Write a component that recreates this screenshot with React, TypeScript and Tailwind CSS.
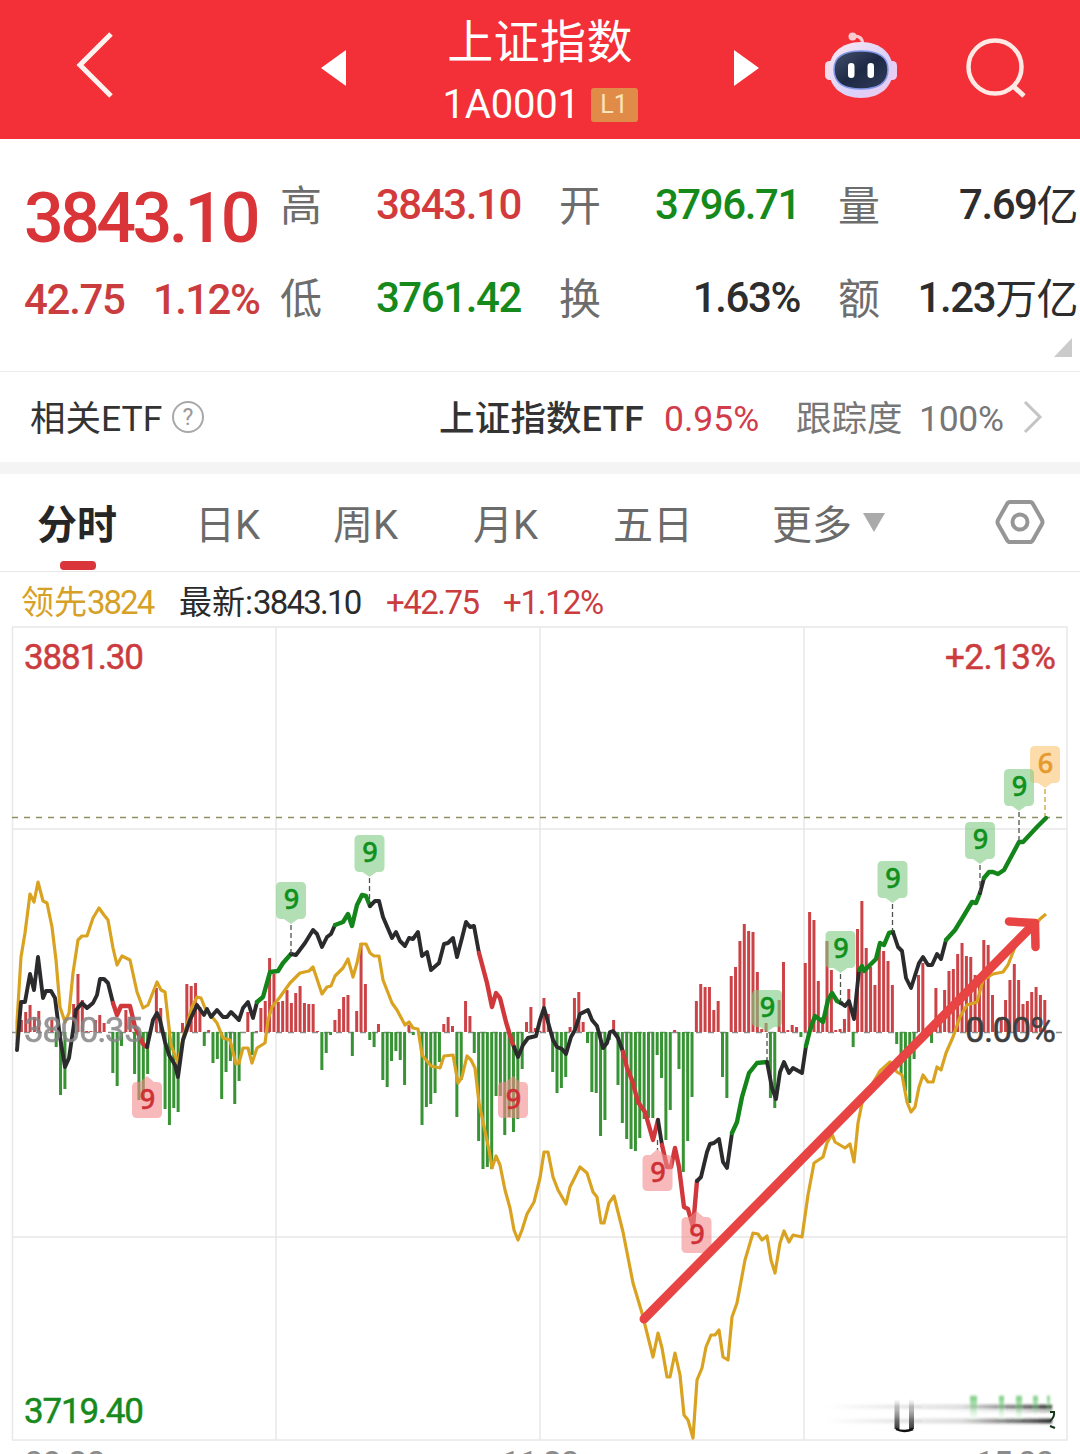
import { clsx } from "clsx";

type Tone = "up" | "down" | "flat";

const TONES: Record<Tone, string> = {
  up: "text-[#d33a3c]",
  down: "text-[#158a1b]",
  flat: "text-[#2d2d2d]",
};

const QUOTES: { label: string; value: string; unit?: string; tone: Tone }[] = [
  { label: "高", value: "3843.10", tone: "up" },
  { label: "开", value: "3796.71", tone: "down" },
  { label: "量", value: "7.69", unit: "亿", tone: "flat" },
  { label: "低", value: "3761.42", tone: "down" },
  { label: "换", value: "1.63%", tone: "flat" },
  { label: "额", value: "1.23", unit: "万亿", tone: "flat" },
];

// one entry per minute, positive = above the zero line
const BARS = [
  0, 12, 20, 27, 15, 21, 0, 0, 12, -15, -63, -57, 0, 28, 58, 32, 1, 1, 12, 17, 9, 0, -41, -54, -14, 22, 15, -42, -68, -68,
  -42, 0, 44, 24, -77, -93, -76, -80, 9, 48, 46, 49, 25, -14, 2, -31, -27, -67, -40, -29, -72, -49, 0, 20, -23, 1, 24, 31, 74, 58,
  30, 31, 42, 29, 39, 46, 29, 28, 28, 1, -38, -21, -3, 12, 23, 35, 37, -24, 21, 89, 48, -8, -15, 8, -48, -55, -29, -19, -28, -53,
  7, -3, 0, -93, -75, -72, -61, -30, 8, 15, 6, -85, -48, 31, 16, -21, -109, -137, -135, -137, -64, -64, -103, -85, -100, -87, -37, 10, 25, 4,
  1, 34, 18, -40, -61, -56, -45, 5, 34, 40, 10, -11, -60, -61, -104, -88, -8, 12, -53, -91, -107, -117, -119, -106, -87, -86, -86, -23, -46, -108,
  -78, 2, -37, -140, -109, -65, 31, 48, 45, 45, 22, 31, -45, -66, 56, 65, 91, 108, 101, 100, 60, 3, 9, -66, -76, 32, 70, 2, 7, 5,
  -5, 69, 120, 112, 51, 15, 91, 62, 2, 3, 13, 43, -15, 103, 131, 84, 65, 47, 88, 81, 71, 47, -12, -43, -59, -71, -27, 57, 69, 0,
  -11, 44, 9, 42, 61, 63, 78, 89, 76, 75, 57, 57, 92, 87, 37, 1, 14, 32, 52, 68, 52, 28, 31, 40, 45, 37, 32,
];

const BASE = 1032;

const LEAD =
  "17,1045 17,1022 21,957 25,933 30,894 34,902 38,882 43,901 47,903 52,927 56,960 60,1007 65,1022 69,1013 73,973 78,940 82,936 87,936 93,918 99,908 104,915 108,920 113,948 117,965 122,956 130,960 137,992 143,1008 148,1005 157,982 161,990 165,992 171,1045 178,1063 183,1038 192,1007 197,997 201,998 205,1008 213,1018 217,1023 223,1038 230,1040 236,1064 239,1063 243,1048 248,1048 252,1063 257,1048 265,1043 268,1020 272,1007 280,997 290,983 300,973 309,971 313,967 322,994 327,987 331,986 335,976 343,968 348,959 353,977 357,963 361,944 366,944 370,953 374,956 379,956 383,980 392,1003 397,1010 405,1025 409,1022 413,1028 418,1029 422,1055 431,1066 440,1068 444,1056 453,1055 458,1083 462,1077 467,1056 471,1060 475,1068 479,1103 489,1150 492,1168 496,1156 500,1165 505,1190 510,1208 514,1230 518,1240 522,1230 527,1214 534,1202 540,1178 544,1152 548,1152 553,1177 558,1190 566,1204 570,1187 580,1167 587,1173 593,1192 597,1197 601,1223 604,1223 609,1203 614,1196 623,1232 633,1283 642,1313 648,1337 653,1357 658,1333 662,1348 667,1377 670,1377 675,1353 680,1375 684,1415 688,1420 693,1438 697,1380 702,1368 706,1347 711,1335 715,1335 719,1330 723,1357 728,1360 732,1317 737,1303 745,1260 753,1233 758,1234 762,1240 767,1236 771,1260 775,1273 780,1243 784,1231 789,1242 793,1235 802,1237 808,1195 814,1163 823,1157 827,1143 832,1134 835,1142 845,1148 850,1144 854,1162 858,1123 862,1103 871,1086 880,1071 890,1062 897,1072 902,1075 907,1102 911,1112 915,1107 919,1087 923,1075 928,1082 933,1082 937,1067 941,1070 946,1053 953,1037 960,1017 967,1005 977,1002 983,980 993,974 1003,972 1008,965 1015,947 1022,938 1030,932 1040,919 1046,914";

const BLACK = "#2b2b2d";
const RED = "#d0383b";
const GREEN = "#14851a";

const PRICE = [
  { c: BLACK, p: "17,1050 21,1002 25,1002 30,974 34,990 38,957 43,998 46,991 51,991 55,998 60,1037 65,1067 69,1058 76,1010 82,1003 87,1008 93,1003 97,995 100,979 104,979 108,983 113,1003" },
  { c: RED, p: "113,1003 117,1015 121,1006 130,1006 135,1027 138,1033 143,1044 147,1047" },
  { c: BLACK, p: "147,1047 153,1020 157,1013 160,1020 165,1042 169,1055 175,1065 178,1077 183,1040 190,1020 197,1005 204,1015 207,1009 211,1017 217,1010 223,1017 227,1017 231,1012 239,1020 243,1008 248,1002 253,1018 257,1002" },
  { c: GREEN, p: "257,1002 263,997 270,972 278,971 283,963 291,954" },
  { c: BLACK, p: "291,954 296,955 305,943 313,930 317,934 322,947 327,937 331,934 335,925" },
  { c: GREEN, p: "335,925 343,922 348,914 352,926 357,905 362,895 366,896 370,906" },
  { c: BLACK, p: "370,906 375,901 379,901 383,917 392,938 396,932 400,941 405,946 409,938 413,939 418,932 422,956 427,952 431,970 439,963 444,944 448,943 453,938 457,957 462,938 466,922 470,927 474,926 479,953" },
  { c: RED, p: "479,953 487,983 492,1007 496,993 500,998 506,1022 512,1042 514,1047" },
  { c: BLACK, p: "514,1047 518,1057 523,1045 528,1038 536,1036 540,1020 544,1008 548,1022 553,1040 557,1047 562,1049 566,1054 571,1037 575,1030 580,1014 588,1010 592,1020 597,1026 603,1048 607,1043 610,1032 613,1031 618,1038 623,1052" },
  { c: RED, p: "623,1052 627,1068 632,1080 638,1102 645,1112 653,1140 658,1120" },
  { c: BLACK, p: "658,1120 662,1145" },
  { c: RED, p: "662,1145 667,1167 671,1167 675,1148 679,1167 684,1207 688,1209 693,1227 697,1181" },
  { c: BLACK, p: "697,1181 701,1177 707,1152 710,1144 714,1143 719,1139 723,1162 727,1168 732,1133" },
  { c: GREEN, p: "732,1133 737,1122 742,1097 749,1073 757,1063 767,1062" },
  { c: BLACK, p: "767,1062 772,1088 776,1099 780,1072 784,1062 789,1073 793,1068 802,1073 806,1046" },
  { c: GREEN, p: "806,1046 810,1030 815,1016 823,1022 828,1000 832,993 837,1001 841,1003" },
  { c: BLACK, p: "841,1003 845,1006 849,1001 854,1019 859,970" },
  { c: GREEN, p: "859,970 862,966 864,971 872,963 876,959 880,943 884,945 889,933 893,932" },
  { c: BLACK, p: "893,932 898,947 902,951 906,978 911,988 919,963 923,957 928,965 932,965 937,954 941,959 946,940" },
  { c: GREEN, p: "946,940 955,930 963,917 972,902 976,903 980,893" },
  { c: BLACK, p: "980,893 984,878" },
  { c: GREEN, p: "984,878 989,872 993,872 998,874 1004,870 1019,842 1023,842 1037,827 1046,818" },
];

// top = upper edge of the tag, stem = y where the dashed stem meets the line
const TAGS = [
  { x: 291, top: 882, stem: 954, kind: "sell" },
  { x: 369.5, top: 835, stem: 903, kind: "sell" },
  { x: 767, top: 990, stem: 1060, kind: "sell" },
  { x: 840.5, top: 931, stem: 1002, kind: "sell" },
  { x: 892.5, top: 861, stem: 932, kind: "sell" },
  { x: 980, top: 822, stem: 893, kind: "sell" },
  { x: 1045, top: 746, stem: 816, kind: "count" },
  { x: 1019, top: 769, stem: 841, kind: "sell" },
  { x: 147, top: 1082, stem: 0, kind: "buy" },
  { x: 513, top: 1082, stem: 0, kind: "buy" },
  { x: 657.5, top: 1155, stem: 1140, kind: "buy" },
  { x: 696.5, top: 1217, stem: 0, kind: "buy" },
];

const TAG_FILL: Record<string, string> = { sell: "#7fcb82", buy: "#f28a8c", count: "#fbc474" };
const TAG_TEXT: Record<string, string> = { sell: "#10901c", buy: "#cf3035", count: "#e69a2c" };

function Tag({ x, top, stem, kind }: { x: number; top: number; stem: number; kind: string }) {
  const up = kind === "buy";
  return (
    <g>
      {stem > 0 && (
        <line x1={x} x2={x} y1={up ? stem : top + 43} y2={up ? top - 5 : stem}
          stroke={kind === "count" ? "#c9a43c" : "#4c544c"} strokeWidth="1.3" strokeDasharray="5 3" />
      )}
      <g fill={TAG_FILL[kind]} opacity="0.6">
        <path d={up
          ? `M${x - 15} ${top + 5}q0 -5 5 -5h3l7 -6l7 6h3q5 0 5 5v26q0 5 -5 5h-20q-5 0 -5 -5z`
          : `M${x - 15} ${top + 5}q0 -5 5 -5h20q5 0 5 5v27q0 5 -5 5h-3l-7 5l-7 -5h-3q-5 0 -5 -5z`} />
      </g>
      <text x={x + 0.5} y={top + 26.5} textAnchor="middle" fill={TAG_TEXT[kind]} stroke={TAG_TEXT[kind]} strokeWidth="0.5"
        className="font-['Noto_Sans'] text-[27px] font-medium">{kind === "count" ? 6 : 9}</text>
    </g>
  );
}

function Robot() {
  return (
    <svg width="74" height="68" viewBox="0 0 74 68" fill="none">
      <defs>
        <linearGradient id="shell" x1="0" y1="0" x2="1" y2="1">
          <stop offset="0" stopColor="#fde8f0" />
          <stop offset="0.6" stopColor="#d9d2fa" />
          <stop offset="1" stopColor="#f2c8ea" />
        </linearGradient>
        <linearGradient id="visor" x1="0" y1="0" x2="1" y2="1">
          <stop offset="0" stopColor="#43506b" />
          <stop offset="0.5" stopColor="#1e2946" />
          <stop offset="1" stopColor="#2f3c58" />
        </linearGradient>
      </defs>
      <path d="M29 5q9 -1 10 8" stroke="#fbc9d0" strokeWidth="3" />
      <circle cx="28.500" cy="5.500" r="4" fill="#fbc9d0" />
      <rect x="1" y="30" width="10" height="19" rx="4.500" fill="#f3dbea" />
      <rect x="63" y="30" width="10" height="19" rx="4.500" fill="#e9cdf5" />
      <path d="M37 11c20 0 32 12 32 28c0 17 -13 28 -32 28s-32 -11 -32 -28c0 -16 12 -28 32 -28z" fill="url(#shell)" />
      <path d="M37 20c18 0 27 6 27 18.500c0 13.500 -9 19.500 -27 19.500s-27 -6 -27 -19.500c0 -12.500 9 -18.500 27 -18.500z" fill="url(#visor)" stroke="#8296e8" strokeWidth="1.500" />
      <rect x="24" y="32" width="6.500" height="15" rx="3.200" fill="#fff" />
      <rect x="43.500" y="32" width="6.500" height="15" rx="3.200" fill="#fff" />
    </svg>
  );
}

function Header() {
  return (
    <header className="h-[139px] bg-[#f32f38] flex items-center text-white">
      <svg className="ml-[74px] mt-[-9px] shrink-0" width="42" height="68" viewBox="0 0 42 68" fill="none">
        <path d="M37 3L6 34L37 65" stroke="#fff3ef" strokeWidth="5" />
      </svg>
      <svg className="ml-[205px] mt-[-4px] shrink-0" width="25" height="36" viewBox="0 0 25 36"><path d="M0 18L25 0V36z" fill="#fff" /></svg>
      <div className="w-[388px] h-full flex flex-col items-center shrink-0">
        <h1 className="h-[80px] pt-[2px] text-[46px] leading-[80px] tracking-[0.4px]">上证指数</h1>
        <div className="flex items-center gap-[13px] h-[48px] pt-[2px]">
          <span className="text-[40px] leading-[48px] tracking-[-0.2px] w-[135px] whitespace-nowrap">1A0001</span>
          <span className="w-[47px] h-[34px] rounded-[3px] bg-[#e08c48] text-[#fbe3bb] text-[25px] leading-[34px] text-center">L1</span>
        </div>
      </div>
      <svg className="mt-[-4px] shrink-0" width="25" height="36" viewBox="0 0 25 36"><path d="M25 18L0 0V36z" fill="#fff" /></svg>
      <div className="ml-[65px] mt-[-9px] shrink-0"><Robot /></div>
      <svg className="ml-[66px] mt-[-4px] shrink-0" width="64" height="64" viewBox="0 0 64 64" fill="none" stroke="#ffe9e4" strokeWidth="4.500">
        <circle cx="31" cy="31" r="26.500" />
        <path d="M49 50L60 60" strokeWidth="5" />
      </svg>
    </header>
  );
}

function Quotes() {
  return (
    <section className="relative h-[233px] pl-[24px] flex border-b border-[#ececec]">
      <div className="w-[256px] shrink-0">
        <div className="mt-[35px] h-[88px] text-[70px] leading-[88px] font-medium tracking-[-3.6px] text-[#d93438]">3843.10</div>
        <div className="mt-[16px] h-[44px] flex text-[42px] leading-[44px] font-medium tracking-[-1.3px] text-[#cb3c3f]">
          <span className="w-[129px]">42.75</span>
          <span className="tracking-[-1.6px]">1.12%</span>
        </div>
      </div>
      <div className="mt-[19px] h-[186px] grid grid-cols-[241px_241px_240px] gap-x-[38px]">
        {QUOTES.map((q) => (
          <div key={q.label} className="h-[93px] flex items-center justify-between text-[42px] whitespace-nowrap">
            <span className="text-[#6d6d6d] pt-[4px]">{q.label}</span>
            <span className={clsx("tracking-[-1.4px] font-medium", TONES[q.tone])}>
              {q.value}<span className="relative top-[2px] font-normal tracking-[-0.6px]">{q.unit}</span>
            </span>
          </div>
        ))}
      </div>
      <svg className="absolute right-[8px] bottom-[14px]" width="18" height="19" viewBox="0 0 18 19"><path d="M18 0V19H0z" fill="#cbcbcb" /></svg>
    </section>
  );
}

function EtfRow() {
  return (
    <section className="h-[90px] flex items-center text-[35.5px] whitespace-nowrap text-[#333] [&>span]:pt-[6px]">
      <span className="ml-[30px] w-[132px]">相关ETF</span>
      <svg className="ml-[10px]" width="32" height="32" viewBox="0 0 32 32">
        <circle cx="16" cy="16" r="15" fill="none" stroke="#a8a8a8" strokeWidth="2" />
        <text x="16" y="24" textAnchor="middle" fill="#999" className="text-[23px]">?</text>
      </svg>
      <span className="ml-[235px] w-[206px] font-medium tracking-[0.2px]">上证指数ETF</span>
      <span className="ml-[19px] w-[97px] text-[#d23b4a]">0.95%</span>
      <span className="ml-[35px] w-[107px] text-[#777]">跟踪度</span>
      <span className="ml-[16px] w-[86px] text-[#777] tracking-[-0.3px]">100%</span>
      <svg className="ml-[18px]" width="20" height="34" viewBox="0 0 20 34" fill="none"><path d="M2 2L17 17L2 32" stroke="#c4c4c4" strokeWidth="3" /></svg>
    </section>
  );
}

function Tabs() {
  return (
    <nav className="h-[98px] border-b border-[#e8e8e8] flex text-[40px] leading-[104px] text-[#6b6b6b] whitespace-nowrap">
      <div className="ml-[37px] w-[158px] h-[98px]">
        <div className="h-[87px] font-bold text-[#262626]">分时</div>
        <div className="ml-[23px] w-[36px] h-[9px] rounded-[4px] bg-[#d9353a]" />
      </div>
      <span className="w-[138px]">日K</span>
      <span className="w-[140px]">周K</span>
      <span className="w-[140px]">月K</span>
      <span className="w-[159px]">五日</span>
      <span className="w-[91px]">更多</span>
      <svg className="mt-[39px]" width="22" height="19" viewBox="0 0 22 19"><path d="M0 0H22L11 19z" fill="#aaa" /></svg>
      <svg className="ml-[110px] mt-[25px]" width="50" height="46" viewBox="0 0 50 46" fill="none" stroke="#969696" strokeWidth="4">
        <path d="M15 3H35Q37 3 38 5L47 21Q48 23 47 25L38 41Q37 43 35 43H15Q13 43 12 41L3 25Q2 23 3 21L12 5Q13 3 15 3z" />
        <circle cx="25" cy="23" r="7.500" />
      </svg>
    </nav>
  );
}

function Legend() {
  return (
    <div className="h-[54px] flex items-center text-[33px] whitespace-nowrap pt-[7px]">
      <span className="ml-[21px] w-[158px] text-[#d6a126]">领先<span className="tracking-[-2px]">3824</span></span>
      <span className="w-[207px] text-[#2b2b2b]">最新:<span className="tracking-[-1.8px]">3843.10</span></span>
      <span className="w-[117px] tracking-[-1.5px] text-[#cb3c3f]">+42.75</span>
      <span className="tracking-[-1.2px] text-[#cb3c3f]">+1.12%</span>
    </div>
  );
}

function Chart() {
  return (
    <svg className="block" width="1080" height="828" viewBox="0 626 1080 828" fill="none">
      <defs>
        <linearGradient id="fadeX"><stop offset="0" stopColor="#222" stopOpacity="0" /><stop offset="0.6" stopColor="#222" stopOpacity="0.2" /><stop offset="1" stopColor="#111" /></linearGradient>
        <linearGradient id="fadeY" x1="0" y1="0" x2="0" y2="1"><stop offset="0" stopColor="#222" stopOpacity="0" /><stop offset="1" stopColor="#222" stopOpacity="0.9" /></linearGradient>
        <linearGradient id="fadeG" x1="0" y1="0" x2="0" y2="1"><stop offset="0" stopColor="#4fb957" stopOpacity="0.8" /><stop offset="1" stopColor="#8fe09a" stopOpacity="0" /></linearGradient>
        <filter id="soft" x="-10%" y="-50%" width="120%" height="200%"><feGaussianBlur stdDeviation="0.8 1.4" /></filter>
      </defs>

      <g stroke="#e8e8e8" strokeWidth="1.5">
        <rect x="12.500" y="627" width="1054.500" height="813" />
        <path d="M276 627V1440M540 627V1440M804 627V1440M12 829H1067M12 1237H1067" />
      </g>
      <path d="M12 817.500H1062" stroke="#8f8f62" strokeWidth="1.500" strokeDasharray="6 6" />
      <path d="M12 1032.500H1062" stroke="#8c8c8c" strokeWidth="1.500" strokeDasharray="6 6" />

      {BARS.map((h, i) => h !== 0 && (
        <rect key={i} x={15.5 + i * 4.355} y={h > 0 ? BASE - h : BASE} width="3" height={Math.abs(h)} fill={h > 0 ? "#cb4347" : "#379333"} />
      ))}

      <polyline points={LEAD} stroke="#d9a321" strokeWidth="3.2" strokeLinejoin="round" />
      {PRICE.map((s) => (
        <polyline key={s.p} points={s.p} stroke={s.c} strokeWidth={s.c === BLACK ? 3.9 : 4.4} strokeLinejoin="round" strokeLinecap="round" />
      ))}
      {TAGS.map((t) => <Tag key={t.x} {...t} />)}

      <g className="font-[Roboto] text-[35px]" strokeWidth="0.5">
        <text x="24" y="669" fill="#cb3c3f" stroke="#cb3c3f" textLength="120">3881.30</text>
        <text x="945" y="669" fill="#cb3c3f" stroke="#cb3c3f" textLength="111">+2.13%</text>
        <text x="24" y="1423" fill="#178a1d" stroke="#178a1d" textLength="120">3719.40</text>
        <text x="24" y="1042" fill="#858585" stroke="#858585" opacity="0.85" textLength="119">3800.35</text>
        <text x="965" y="1042" fill="#3f3f3f" stroke="#3f3f3f" textLength="91">0.00%</text>
        <g fill="#8b8b8b">
          <text x="24" y="1476" textLength="82">09:30</text>
          <text x="501" y="1476" textLength="79">11:30</text>
          <text x="975" y="1476" textLength="80">15:00</text>
        </g>
      </g>

      <g stroke="#e84444" strokeLinecap="round" strokeLinejoin="round">
        <path d="M644 1319L1031 927" strokeWidth="9" />
        <path d="M1009 921.500L1035 923L1035.500 947" strokeWidth="8.500" />
      </g>

      <g filter="url(#soft)">
        <rect x="826" y="1405" width="226" height="3.500" fill="url(#fadeX)" />
        <rect x="826" y="1419" width="226" height="4" fill="url(#fadeX)" />
        <rect x="940" y="1410" width="112" height="2" fill="url(#fadeX)" opacity="0.5" />
        <rect x="970" y="1396" width="7" height="24" fill="url(#fadeG)" />
        <rect x="999" y="1396" width="5" height="24" fill="url(#fadeG)" />
        <rect x="1016" y="1396" width="6" height="24" fill="url(#fadeG)" />
        <rect x="1033" y="1396" width="5" height="20" fill="url(#fadeG)" />
        <rect x="1047" y="1396" width="3" height="18" fill="url(#fadeG)" />
      </g>
      <rect x="894.500" y="1399" width="5" height="30" fill="url(#fadeY)" />
      <rect x="909" y="1399" width="5" height="30" fill="url(#fadeY)" />
      <path d="M896 1429Q904 1433 913 1429" stroke="#111" strokeWidth="2.500" />
      <path d="M1050 1412H1054Q1055 1417 1050 1421M1050 1426L1055 1428" stroke="#12351a" strokeWidth="2" />
    </svg>
  );
}

export default function App() {
  return (
    <div className="w-[1080px] h-[1454px] overflow-hidden bg-white font-[Roboto,'Noto_Sans_CJK_SC',sans-serif]">
      <Header />
      <Quotes />
      <EtfRow />
      <div className="h-[12px] bg-[#f4f4f4]" />
      <Tabs />
      <Legend />
      <Chart />
    </div>
  );
}
